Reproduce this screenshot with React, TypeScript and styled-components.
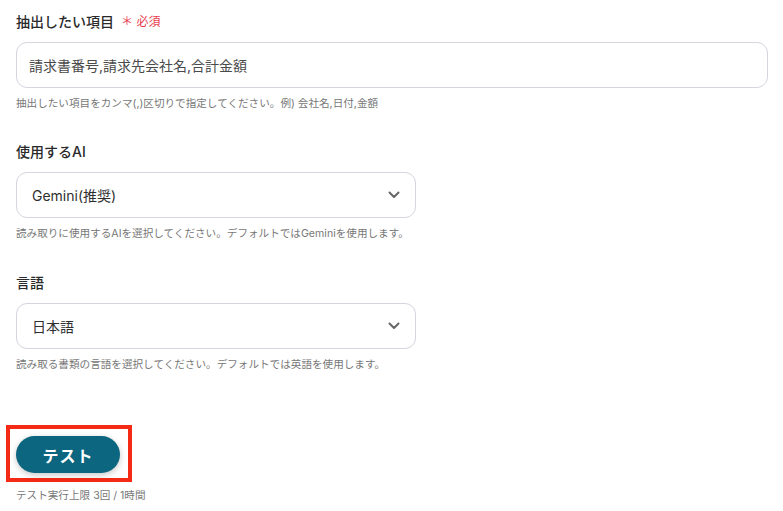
import React from "react";
import styled, { createGlobalStyle } from "styled-components";

const Global = createGlobalStyle`
  html, body { margin: 0; padding: 0; background: #fff; }
  body { font-family: "Inter", "Noto Sans CJK JP", sans-serif; color: #333; }
`;

const Page = styled.div`
  padding: 12px 15px 0 16px;
  display: flex;
  flex-direction: column;
`;

const Field = styled.div<{ $gap?: number }>`
  display: flex;
  flex-direction: column;
  margin-bottom: ${(p) => p.$gap ?? 30}px;
`;

const Label = styled.div`
  display: flex;
  align-items: center;
  gap: 7px;
  font-size: 14px;
  font-weight: 500;
  line-height: 20px;
  color: #2a2a2a;
  margin-bottom: 10px;
`;

const Required = styled.span`
  font-size: 12px;
  font-weight: 400;
  color: #e8404f;
  display: inline-flex;
  align-items: center;
  gap: 3px;
`;

const TextInput = styled.div`
  box-sizing: border-box;
  height: 46px;
  border: 1px solid #d3d6dd;
  border-radius: 11px;
  display: flex;
  align-items: center;
  padding: 0 12px;
  font-size: 14px;
  color: #4a4a4a;
`;

const Select = styled.div`
  box-sizing: border-box;
  width: 400px;
  height: 46px;
  border: 1px solid #d3d6dd;
  border-radius: 11px;
  display: flex;
  align-items: center;
  justify-content: space-between;
  padding: 0 15px 0 15px;
  font-size: 14px;
  color: #2f2f2f;
`;

const Help = styled.div`
  margin-top: 8px;
  font-size: 10.6px;
  line-height: 16px;
  color: #777;
`;

const Highlight = styled.div`
  align-self: flex-start;
  margin-left: -10px;
  margin-top: 52px;
  border: 4px solid #f52a14;
  padding: 7px 8px 5px 6px;
  display: flex;
`;

const Button = styled.button`
  width: 104px;
  height: 37px;
  border: none;
  border-radius: 19px;
  background: #0c6680;
  color: #fff;
  font-family: "Inter", "Noto Sans CJK JP", sans-serif;
  font-size: 16px;
  font-weight: 700;
  letter-spacing: 1px;
  box-shadow: 0 2px 6px rgba(0, 0, 0, 0.22);
  cursor: pointer;
`;

const Note = styled.div`
  margin-top: 6px;
  font-size: 10.6px;
  line-height: 16px;
  color: #777;
`;

const Chevron = () => (
  <svg width="12" height="8" viewBox="0 0 12 8" fill="none">
    <path d="M1.5 1.5 L6 6 L10.5 1.5" stroke="#666" strokeWidth="2" strokeLinecap="round" strokeLinejoin="round" />
  </svg>
);

export default function App() {
  return (
    <>
      <Global />
      <Page>
        <Field>
          <Label>
            抽出したい項目
            <Required>＊ 必須</Required>
          </Label>
          <TextInput>請求書番号,請求先会社名,合計金額</TextInput>
          <Help>抽出したい項目をカンマ(,)区切りで指定してください。例) 会社名,日付,金額</Help>
        </Field>
        <Field $gap={31}>
          <Label>使用するAI</Label>
          <Select>
            Gemini(推奨)
            <Chevron />
          </Select>
          <Help>読み取りに使用するAIを選択してください。デフォルトではGeminiを使用します。</Help>
        </Field>
        <Field $gap={0}>
          <Label>言語</Label>
          <Select>
            日本語
            <Chevron />
          </Select>
          <Help>読み取る書類の言語を選択してください。デフォルトでは英語を使用します。</Help>
        </Field>
        <Highlight>
          <Button>テスト</Button>
        </Highlight>
        <Note>テスト実行上限 3回 / 1時間</Note>
      </Page>
    </>
  );
}
